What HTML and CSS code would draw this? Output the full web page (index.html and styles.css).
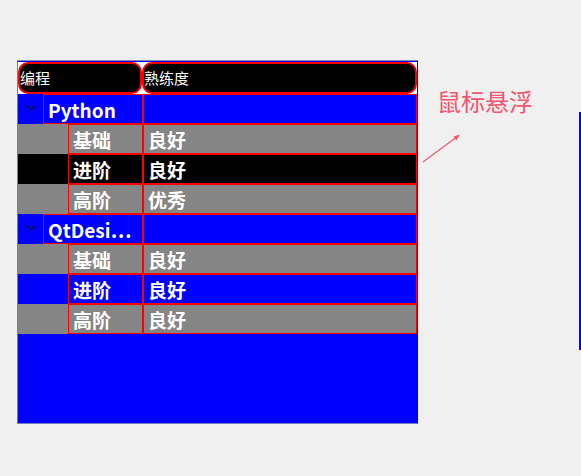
FILE: index.html
```html
<!DOCTYPE html>
<html>
<head>
<meta charset="utf-8">
<link rel="stylesheet" href="styles.css">
</head>
<body>
<div class="page">
  <div class="tree">
    <div class="header">
      <div class="hsec hsec1"><div class="hin">编程</div></div>
      <div class="hsec hsec2"><div class="hin">熟练度</div></div>
    </div>
    <div class="row blue top">
      <div class="branch"><svg class="chev" width="12" height="7" viewBox="0 0 12 7"><polyline points="1.5,1.5 6,5.5 10.5,1.5" fill="none" stroke="#0a0a40" stroke-width="1.6"/></svg></div>
      <div class="cell c1">Python</div>
      <div class="cell c2"></div>
    </div>
    <div class="row gray child">
      <div class="indent"></div>
      <div class="cell c1">基础</div>
      <div class="cell c2">良好</div>
    </div>
    <div class="row black child">
      <div class="indent"></div>
      <div class="cell c1">进阶</div>
      <div class="cell c2">良好</div>
    </div>
    <div class="row gray child">
      <div class="indent"></div>
      <div class="cell c1">高阶</div>
      <div class="cell c2">优秀</div>
    </div>
    <div class="row blue top">
      <div class="branch"><svg class="chev" width="12" height="7" viewBox="0 0 12 7"><polyline points="1.5,1.5 6,5.5 10.5,1.5" fill="none" stroke="#0a0a40" stroke-width="1.6"/></svg></div>
      <div class="cell c1">QtDesi…</div>
      <div class="cell c2"></div>
    </div>
    <div class="row gray child">
      <div class="indent"></div>
      <div class="cell c1">基础</div>
      <div class="cell c2">良好</div>
    </div>
    <div class="row blue child">
      <div class="indent"></div>
      <div class="cell c1">进阶</div>
      <div class="cell c2">良好</div>
    </div>
    <div class="row gray child">
      <div class="indent"></div>
      <div class="cell c1">高阶</div>
      <div class="cell c2">良好</div>
    </div>
  </div>
  <div class="note">鼠标悬浮</div>
  <svg class="arrow" width="45" height="36" viewBox="0 0 45 36">
    <line x1="3" y1="32" x2="38" y2="6" stroke="#f05a6e" stroke-width="1.2"/>
    <polygon points="40,4.5 33.5,6.5 36.5,10.5" fill="#f05a6e"/>
  </svg>
  <div class="edge"></div>
</div>
</body>
</html>
```
FILE: styles.css
```css
html, body {
  margin: 0;
  background: #f0f0f0;
  font-family: "Noto Sans CJK SC", "Noto Sans", sans-serif;
}
.page {
  position: relative;
  height: 476px;
  box-sizing: border-box;
  padding: 60px 0 0 17px;
}
.tree {
  width: 401px;
  height: 364px;
  box-sizing: border-box;
  border: 1px solid;
  border-color: #8a8ab0 #0000ff #7c7cc0 #808080;
  background: #0000ff;
  display: flex;
  flex-direction: column;
}
.header {
  display: flex;
  height: 33px;
  padding-top: 1px;
  box-sizing: border-box;
  flex: none;
}
.hsec {
  background: #ffffff;
  height: 32px;
}
.hsec1 { width: 124px; }
.hsec2 { width: 275px; }
.hin {
  height: 100%;
  box-sizing: border-box;
  background: #000;
  border: 2px solid #ff0000;
  border-radius: 10px;
  color: #fff;
  font-size: 15px;
  line-height: 28px;
  white-space: nowrap;
}
.row {
  display: flex;
  height: 30px;
  flex: none;
}
.blue { background: #0000ff; }
.gray { background: #858585; }
.black { background: #000000; }
.branch {
  width: 25px;
  display: flex;
  align-items: center;
  justify-content: center;
}
.chev { margin-top: -3px; }
.indent { width: 50px; }
.cell {
  box-sizing: border-box;
  border: 1px solid #ff0000;
  color: #fff;
  font-weight: bold;
  font-size: 19px;
  line-height: 29px;
  padding-left: 4px;
  white-space: nowrap;
  overflow: hidden;
}
.top .c1 { width: 100px; }
.child .c1 { width: 75px; }
.c2 { flex: 1; }
.note {
  position: absolute;
  left: 437px;
  top: 86px;
  font-size: 24px;
  line-height: 30px;
  color: #f0566e;
  white-space: nowrap;
}
.arrow {
  position: absolute;
  left: 420px;
  top: 130px;
}
.edge {
  position: absolute;
  left: 579px;
  top: 112px;
  width: 2px;
  height: 238px;
  background: #0000ff;
}
```
